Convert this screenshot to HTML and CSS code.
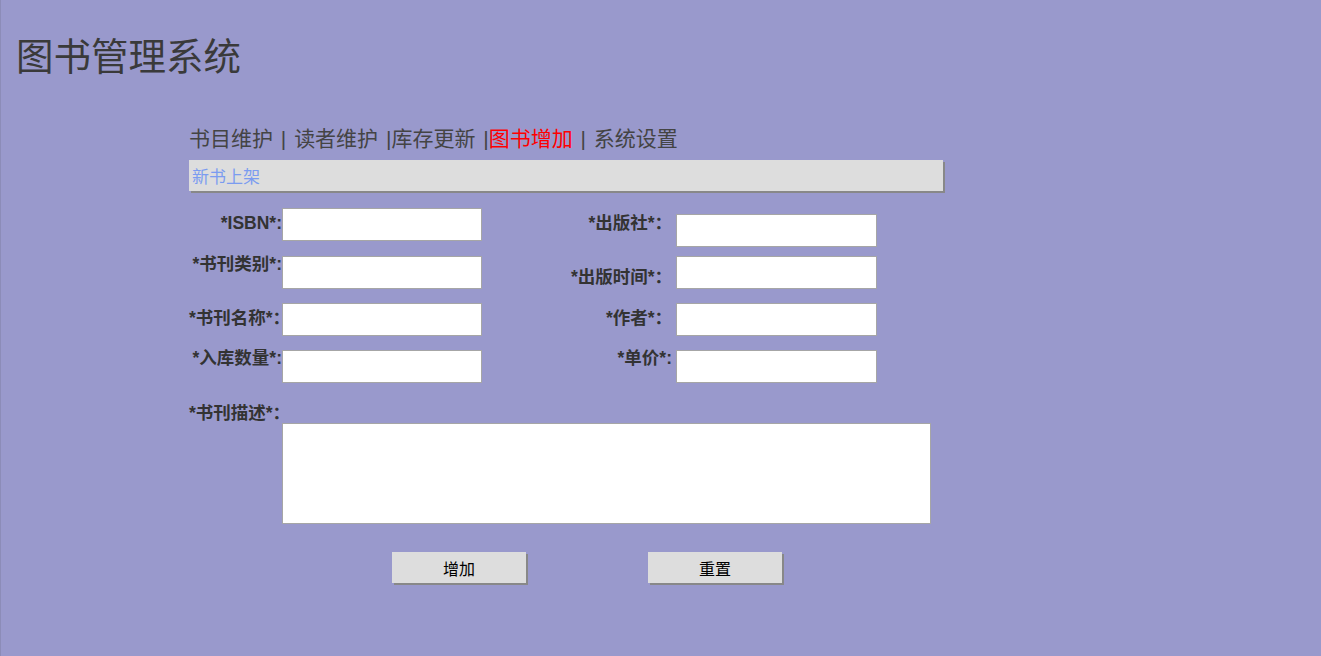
FILE: index.html
```html
<!DOCTYPE html>
<html lang="zh-CN">
<head>
    <meta charset="UTF-8">
    <meta name="viewport" content="width=device-width, initial-scale=1.0">
    <title>图书管理系统</title>
    <link rel="stylesheet" href="styles.css">
</head>
<body>
    <h1 class="title">图书管理系统</h1>

    <div class="main">
        <div class="nav">
            <span>书目维护</span> | <span>读者维护</span> |<span>库存更新</span> |<span class="current">图书增加</span> | <span>系统设置</span>
        </div>
        <div class="bar">新书上架</div>

        <form class="form">
            <div class="fields">
                <label class="label at-mid">*ISBN*:</label>
                <input class="box" type="text">
                <label class="label label-r at-mid">*出版社*：</label>
                <input class="box box-low" type="text">

                <label class="label at-top">*书刊类别*:</label>
                <input class="box" type="text">
                <label class="label label-r at-low">*出版时间*：</label>
                <input class="box" type="text">

                <label class="label at-mid">*书刊名称*：</label>
                <input class="box" type="text">
                <label class="label label-r at-mid">*作者*：</label>
                <input class="box" type="text">

                <label class="label at-top">*入库数量*:</label>
                <input class="box" type="text">
                <label class="label label-r at-top">*单价*:</label>
                <input class="box" type="text">
            </div>

            <label class="label desc-label">*书刊描述*：</label>
            <textarea class="desc"></textarea>

            <div class="buttons">
                <button type="button" class="btn">增加</button>
                <button type="reset" class="btn">重置</button>
            </div>
        </form>
    </div>
</body>
</html>
```

FILE: styles.css
```css
*{
    margin: 0;
    padding: 0;
}
body{
    background-color: #9999cc;
    border-left: 1px solid #8c8cb8;
    min-height: 656px;
    box-sizing: border-box;
    font-family: "Liberation Sans", "Noto Sans CJK SC", sans-serif;
}
.title{
    margin: 35px 0 0 15px;
    font-size: 37.5px;
    line-height: 37px;
    font-weight: normal;
    color: #3a3a3a;
    font-family: "Noto Sans CJK SC", sans-serif;
}
.main{
    margin-left: 188px;
}
.nav{
    margin-top: 56px;
    font-size: 21px;
    line-height: 21px;
    word-spacing: 2px;
    color: #444;
}
.nav .current{
    color: #ff0000;
}
.bar{
    margin-top: 11px;
    width: 754px;
    height: 31px;
    line-height: 31px;
    padding-left: 3px;
    box-sizing: border-box;
    background-color: #dddddd;
    box-shadow: 2px 2px 0 #888;
    color: #7b9cf0;
    font-size: 17px;
    font-family: "Noto Sans CJK SC", sans-serif;
}
.form{
    margin-top: 15px;
}
.fields{
    display: grid;
    grid-template-columns: 93px 200px 194px 201px;
    grid-template-rows: 48px 47px 47px 47px;
}
.label{
    display: block;
    font-size: 17px;
    line-height: 20px;
    font-weight: bold;
    color: #333;
    text-align: right;
    white-space: nowrap;
    align-self: start;
}
.label:lang(zh-CN){
    font-size: 17.5px;
}
.label-r{
    padding-right: 4px;
}
.at-top{
    margin-top: 0;
}
.at-mid{
    margin-top: 7px;
}
.at-low{
    margin-top: 13px;
}
.box{
    width: 100%;
    height: 33px;
    margin-top: 2px;
    box-sizing: border-box;
    border: 1px solid #a6a6a6;
    background-color: #fff;
    align-self: start;
}
.box-low{
    margin-top: 8px;
}
.desc-label{
    text-align: left;
    margin-top: 8px;
}
.desc{
    display: block;
    margin-left: 93px;
    width: 649px;
    height: 101px;
    box-sizing: border-box;
    border: 1px solid #a6a6a6;
    background-color: #fff;
    resize: none;
}
.buttons{
    display: flex;
    gap: 122px;
    margin: 28px 0 0 203px;
}
.btn{
    width: 134px;
    height: 31px;
    border: none;
    background-color: #dddddd;
    box-shadow: 2px 2px 0 #888;
    color: #000;
    font-size: 16px;
    font-family: "Noto Sans CJK SC", sans-serif;
    cursor: pointer;
}
```
